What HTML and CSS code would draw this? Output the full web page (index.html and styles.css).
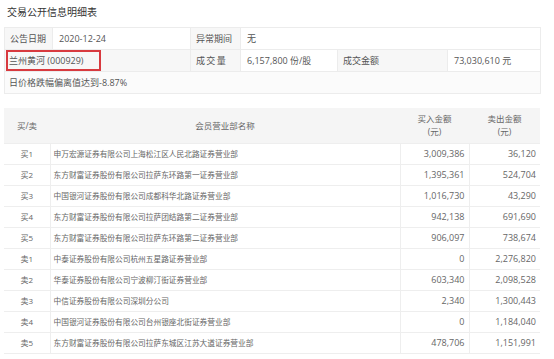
FILE: index.html
```html
<!DOCTYPE html>
<html lang="zh-CN">
<head>
  <meta charset="UTF-8">
  <title>交易公开信息明细表</title>
  <link rel="stylesheet" href="styles.css">
</head>
<body>

  <div class="page">
    <h1 class="title">交易公开信息明细表</h1>

    <!-- Summary table -->
    <table class="summary">
      <colgroup>
        <col style="width:48px"><col style="width:138px"><col style="width:50px">
        <col style="width:97px"><col style="width:110px"><col style="width:93px">
      </colgroup>
      <tr>
        <td class="label">公告日期</td>
        <td>2020-12-24</td>
        <td class="label">异常期间</td>
        <td colspan="3">无</td>
      </tr>
      <tr>
        <td colspan="2" class="stock">
          兰州黄河 (000929)
          <span class="mark"></span>
        </td>
        <td class="label spaced">成 交 量</td>
        <td>6,157,800 份/股</td>
        <td class="label">成交金额</td>
        <td>73,030,610 元</td>
      </tr>
      <tr>
        <td colspan="6" class="note">日价格跌幅偏离值达到-8.87%</td>
      </tr>
    </table>

    <!-- Broker table -->
    <table class="brokers">
      <colgroup>
        <col style="width:46px"><col style="width:350px"><col style="width:69px"><col style="width:71px">
      </colgroup>
      <thead>
        <tr>
          <th>买/卖</th>
          <th>会员营业部名称</th>
          <th>买入金额<br>(元)</th>
          <th>卖出金额<br>(元)</th>
        </tr>
      </thead>
      <tbody>
        <tr><td class="side">买1</td><td class="name">申万宏源证券有限公司上海松江区人民北路证券营业部</td><td class="num">3,009,386</td><td class="num">36,120</td></tr>
        <tr><td class="side">买2</td><td class="name">东方财富证券股份有限公司拉萨东环路第一证券营业部</td><td class="num">1,395,361</td><td class="num">524,704</td></tr>
        <tr><td class="side">买3</td><td class="name">中国银河证券股份有限公司成都科华北路证券营业部</td><td class="num">1,016,730</td><td class="num">43,290</td></tr>
        <tr><td class="side">买4</td><td class="name">东方财富证券股份有限公司拉萨团结路第二证券营业部</td><td class="num">942,138</td><td class="num">691,690</td></tr>
        <tr><td class="side">买5</td><td class="name">东方财富证券股份有限公司拉萨东环路第二证券营业部</td><td class="num">906,097</td><td class="num">738,674</td></tr>
        <tr><td class="side">卖1</td><td class="name">中泰证券股份有限公司杭州五星路证券营业部</td><td class="num">0</td><td class="num">2,276,820</td></tr>
        <tr><td class="side">卖2</td><td class="name">华泰证券股份有限公司宁波柳汀街证券营业部</td><td class="num">603,340</td><td class="num">2,098,528</td></tr>
        <tr><td class="side">卖3</td><td class="name">中信证券股份有限公司深圳分公司</td><td class="num">2,340</td><td class="num">1,300,443</td></tr>
        <tr><td class="side">卖4</td><td class="name">中国银河证券股份有限公司台州银座北街证券营业部</td><td class="num">0</td><td class="num">1,184,040</td></tr>
        <tr><td class="side">卖5</td><td class="name">东方财富证券股份有限公司拉萨东城区江苏大道证券营业部</td><td class="num">478,706</td><td class="num">1,151,991</td></tr>
      </tbody>
    </table>
  </div>

</body>
</html>
```

FILE: styles.css
```css
/* Reset */
* {
  margin: 0;
  padding: 0;
  box-sizing: border-box;
}

body {
  background: #fff;
  font-family: "Open Sans", "Noto Sans CJK SC", sans-serif;
  color: #555;
}

.page {
  padding: 4px 0 0 4px;
}

.title {
  font-size: 10px;
  font-weight: normal;
  color: #333;
  line-height: 16px;
  padding-left: 3px;
  margin-bottom: 7px;
}

/* Summary table */
.summary {
  width: 536px;
  table-layout: fixed;
  border-collapse: collapse;
  font-size: 9px;
  color: #555;
}
.summary td {
  height: 22px;
  padding: 0 6px;
  border: 1px solid #ececec;
  background: #fff;
  white-space: nowrap;
}
.summary td.label {
  background: #f7f7f7;
  padding-left: 5px;
}
.summary td.spaced {
  word-spacing: -1px;
}
.summary td.stock {
  position: relative;
  padding-left: 4px;
  background: #f7f7f7;
}
.summary td.note {
  padding-left: 4px;
  background: #fbfbfb;
}

/* red annotation box */
.mark {
  position: absolute;
  left: 1px;
  top: 0;
  width: 95px;
  height: 21px;
  border: 2px solid #d83a3f;
}

/* Broker table */
.brokers {
  width: 536px;
  margin-top: 14px;
  table-layout: fixed;
  border-collapse: collapse;
}
.brokers th {
  height: 35px;
  background: #f5f5f5;
  font-size: 8.5px;
  font-weight: normal;
  color: #666;
  line-height: 13px;
  border-bottom: 1px solid #eee;
  text-align: center;
}
.brokers td {
  height: 21px;
  border: 1px solid #eee;
  border-top: none;
  font-size: 7.7px;
  color: #666;
  white-space: nowrap;
}
.brokers td:first-child {
  border-left: none;
}
.brokers td:last-child {
  border-right: none;
}
.brokers td.side {
  text-align: center;
  font-size: 8px;
}
.brokers td.name {
  padding-left: 3px;
}
.brokers td.num {
  text-align: right;
  padding-right: 4px;
  font-size: 9px;
}
```
